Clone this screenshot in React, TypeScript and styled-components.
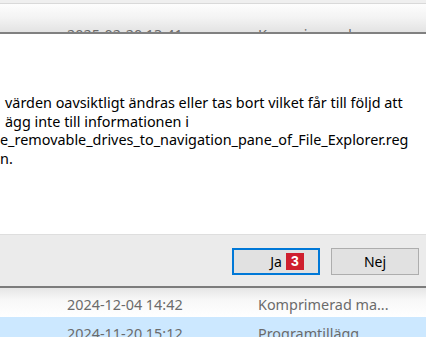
import styled, { createGlobalStyle } from "styled-components";

const GlobalStyle = createGlobalStyle`
  html, body {
    margin: 0;
    padding: 0;
    background: #ffffff;
  }
  body {
    font-family: "Noto Sans", "Open Sans", "Liberation Sans", sans-serif;
  }
`;

const Page = styled.div`
  width: 426px;
  height: 337px;
  overflow: hidden;
  display: flex;
  flex-direction: column;
  background: #ffffff;
`;

const TopStrip = styled.div`
  height: 3px;
  background: #efefef;
  border-bottom: 1px solid #d9d9d9;
  flex: none;
`;

const HeaderRow = styled.div`
  height: 28px;
  flex: none;
  overflow: hidden;
  background: linear-gradient(180deg, #fdfdfd 0%, #f3f3f3 50%, #e3e3e3 100%);
  display: flex;
  align-items: flex-start;
`;

const Cell = styled.span<{ $left: number; $width: number; $top?: number }>`
  margin-left: ${(p) => p.$left}px;
  width: ${(p) => p.$width}px;
  padding-top: ${(p) => p.$top ?? 0}px;
  flex: none;
  white-space: nowrap;
  font-size: 14.4px;
  line-height: 18px;
  color: #6b6b6b;
`;

const Dialog = styled.div`
  flex: none;
  display: flex;
  flex-direction: column;
  border-top: 2px solid #808080;
  border-bottom: 2px solid #7c7c7c;
`;

const Body = styled.div`
  height: 200px;
  background: #ffffff;
  padding-top: 60px;
  box-sizing: border-box;
  display: flex;
  flex-direction: column;
`;

const Line = styled.div<{ $indent: number }>`
  padding-left: ${(p) => p.$indent}px;
  white-space: nowrap;
  font-size: 14.4px;
  line-height: 18.5px;
  color: #000000;
`;

const ButtonBar = styled.div`
  height: 52px;
  box-sizing: border-box;
  background: #ebebeb;
  border-top: 1px solid #dedede;
  display: flex;
  justify-content: flex-end;
  align-items: flex-start;
  gap: 11px;
  padding: 13px 7px 0 0;
`;

const Button = styled.div<{ $primary?: boolean }>`
  width: 88px;
  height: 27px;
  box-sizing: border-box;
  background: #e1e1e1;
  border: ${(p) => (p.$primary ? "2px solid #0078d7" : "1px solid #adadad")};
  display: flex;
  align-items: center;
  justify-content: center;
  gap: 4px;
  font-size: 14px;
  color: #000000;
  padding-left: ${(p) => (p.$primary ? "22px" : "0")};
`;

const Badge = styled.span`
  background: #cf1f2e;
  color: #ffffff;
  font-family: "Liberation Sans", Arial, sans-serif;
  font-weight: 700;
  font-size: 14px;
  line-height: 17px;
  width: 18px;
  height: 17px;
  text-align: center;
`;

const Shadow = styled.div`
  height: 29px;
  flex: none;
  display: flex;
  align-items: flex-start;
  background: linear-gradient(180deg, #e6e6e6 0%, #f7f7f7 40%, #ffffff 100%);
`;

const Selected = styled.div`
  flex: 1;
  display: flex;
  align-items: flex-start;
  background: #cce8ff;
`;

export default function App() {
  return (
    <>
      <GlobalStyle />
      <Page>
        <TopStrip />
        <HeaderRow>
          <Cell $left={67} $width={191} $top={22}>
            2025-02-20 13:41
          </Cell>
          <Cell $left={0} $width={160} $top={22}>
            Komprimerad mapp
          </Cell>
        </HeaderRow>
        <Dialog>
          <Body>
            <Line $indent={5}>värden oavsiktligt ändras eller tas bort vilket får till följd att</Line>
            <Line $indent={5}>ägg inte till informationen i</Line>
            <Line $indent={0}>e_removable_drives_to_navigation_pane_of_File_Explorer.reg</Line>
            <Line $indent={0}>n.</Line>
          </Body>
          <ButtonBar>
            <Button $primary>
              Ja <Badge>3</Badge>
            </Button>
            <Button>Nej</Button>
          </ButtonBar>
        </Dialog>
        <Shadow>
          <Cell $left={67} $width={191} $top={8}>
            2024-12-04 14:42
          </Cell>
          <Cell $left={0} $width={160} $top={8}>
            Komprimerad ma...
          </Cell>
        </Shadow>
        <Selected>
          <Cell $left={67} $width={191} $top={8}>
            2024-11-20 15:12
          </Cell>
          <Cell $left={0} $width={160} $top={8}>
            Programtillägg
          </Cell>
        </Selected>
      </Page>
    </>
  );
}
